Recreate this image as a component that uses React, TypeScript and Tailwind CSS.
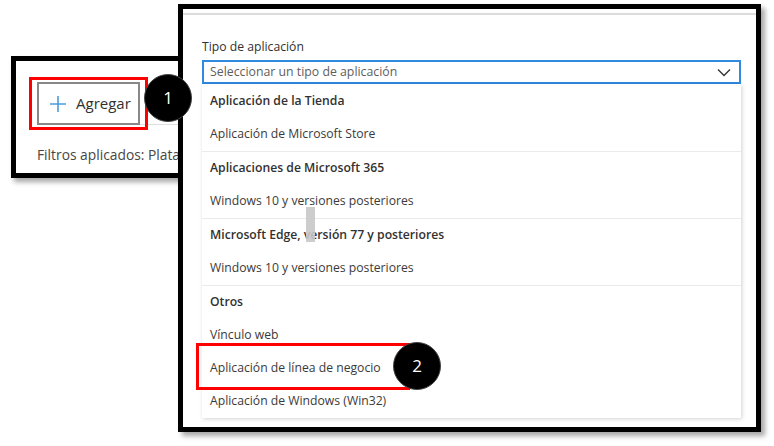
import React from "react";

const font = { fontFamily: '"Open Sans", "Noto Sans", Arial, sans-serif' };

function Header({ children }: { children: React.ReactNode }) {
  return (
    <div className="flex h-[33px] items-center pl-[8px] text-[12.2px] font-semibold text-[#323130]">
      {children}
    </div>
  );
}

function Item({ children }: { children: React.ReactNode }) {
  return (
    <div className="flex h-[33px] items-center pl-[8px] text-[12.2px] text-[#3b3a39]">
      {children}
    </div>
  );
}

function Divider() {
  return <div className="h-px bg-[#edebe9]" />;
}

export default function App() {
  return (
    <div className="relative h-[446px] w-[774px] overflow-hidden bg-white" style={font}>
      {/* Left window */}
      <div className="absolute left-[11px] top-[56px] h-[122px] w-[210px] border-[5px] border-black bg-white shadow-[3px_4px_5px_rgba(0,0,0,0.35)]">
        <div className="ml-[21px] flex h-[64px] items-end border-b border-[#e1dfdd]">
          <div className="mb-[-1px] flex h-[43px] w-[103px] items-center gap-[9px] border-2 border-[#8a8886] bg-white pl-[10px]">
            <svg width="18" height="18" viewBox="0 0 18 18">
              <path d="M9 1v16M1 9h16" stroke="#4a9de0" strokeWidth="1.6" fill="none" />
            </svg>
            <span className="text-[15px] text-[#323130]">Agregar</span>
          </div>
        </div>
        <div className="mt-[21px] whitespace-nowrap pl-[21px] text-[13.8px] leading-[18px] text-[#484644]">
          Filtros aplicados: Plataforma
        </div>
      </div>

      {/* Right window */}
      <div className="absolute left-[178px] top-[4px] flex h-[428px] w-[583px] flex-col border-[5px] border-black bg-white shadow-[4px_4px_5px_rgba(0,0,0,0.35)]">
        <div className="mt-[4px] h-[2px] bg-[#dcdcdc]" />
        <div className="pl-[19px] pr-[15px]">
          <div className="mt-[24px] text-[12.2px] leading-[16px] text-[#323130]">Tipo de aplicación</div>
          <div className="mt-[5px] flex h-[24px] items-center justify-between border-2 border-[#2f8ae0] pl-[6px] pr-[8px]">
            <span className="text-[12.3px] text-[#605e5c]">Seleccionar un tipo de aplicación</span>
            <svg width="14" height="9" viewBox="0 0 14 9">
              <path d="M1 1.5l6 6 6-6" stroke="#323130" strokeWidth="1.3" fill="none" />
            </svg>
          </div>
          <div className="relative w-[539px] bg-white pt-[1px] shadow-[1px_1px_4px_rgba(0,0,0,0.18)]">
            <Header>Aplicación de la Tienda</Header>
            <Item>Aplicación de Microsoft Store</Item>
            <Divider />
            <Header>Aplicaciones de Microsoft 365</Header>
            <Item>Windows 10 y versiones posteriores</Item>
            <Divider />
            <Header>Microsoft Edge, versión 77 y posteriores</Header>
            <Item>Windows 10 y versiones posteriores</Item>
            <Divider />
            <Header>Otros</Header>
            <Item>Vínculo web</Item>
            <Item>Aplicación de línea de negocio</Item>
            <Item>Aplicación de Windows (Win32)</Item>
          </div>
        </div>
      </div>

      {/* Stray scroll artifact */}
      <div className="absolute left-[306px] top-[207px] h-[35px] w-[9px] bg-[#c8c8c8] opacity-90" />

      {/* Annotations */}
      <div className="absolute left-[29px] top-[77px] h-[53px] w-[119px] border-[3px] border-[#ff0000]" />
      <div className="absolute left-[144px] top-[74px] flex h-[48px] w-[48px] items-center justify-center rounded-full border border-[#444] bg-black text-[17px] text-white">
        1
      </div>
      <div className="absolute left-[196px] top-[343px] h-[47px] w-[214px] border-[3px] border-[#ff0000]" />
      <div className="absolute left-[393px] top-[342px] flex h-[48px] w-[48px] items-center justify-center rounded-full border border-[#444] bg-black text-[17px] text-white">
        2
      </div>
    </div>
  );
}
